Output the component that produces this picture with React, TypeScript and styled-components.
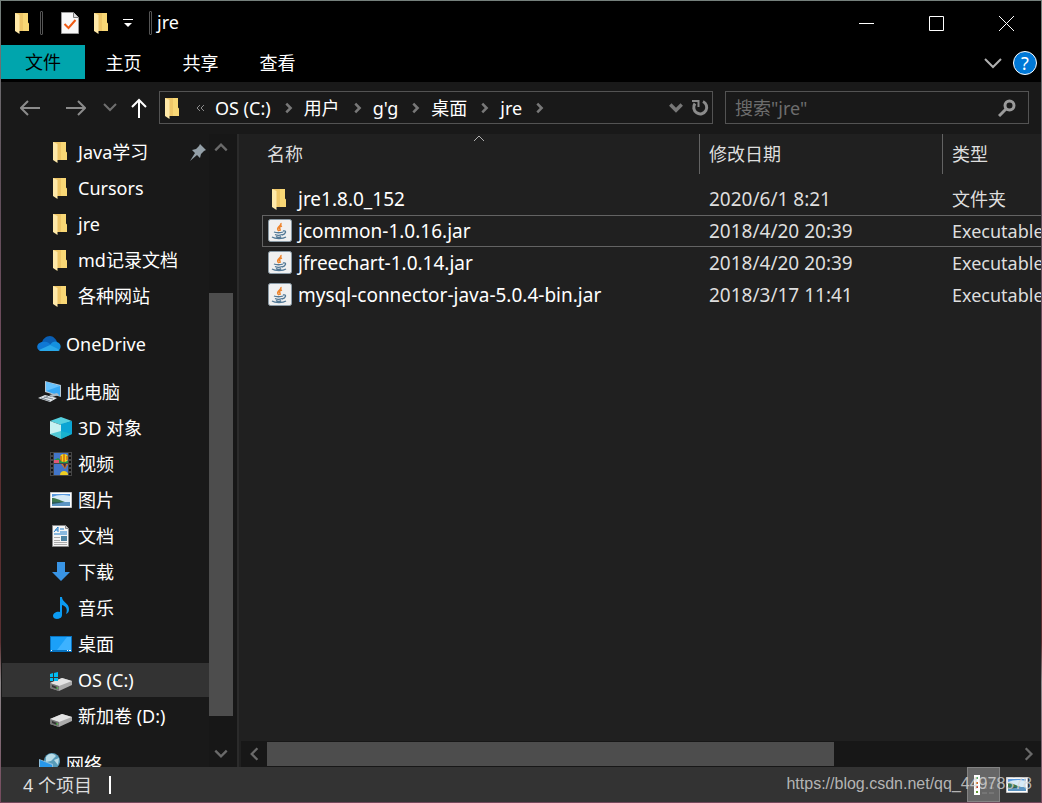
import React from "react";
import styled, { createGlobalStyle, css } from "styled-components";

const Global = createGlobalStyle`
  *, *::before, *::after { box-sizing: border-box; }
  body { margin: 0; background: #000; }
  button, input { font: inherit; color: inherit; }
  svg { flex: none; }
`;

const plainButton = css`
  display: flex;
  align-items: center;
  justify-content: center;
  padding: 0;
  border: 0;
  background: transparent;
`;

const Frame = styled.div`
  height: 100vh;
  display: flex;
  padding: 1px;
  overflow: hidden;
  background: linear-gradient(#75807c, #61515c 22%, #74495c 50%, #5b2f31 60%, #5b2f31 80%, #8a8587 85%, #74485c);
  font-family: "Noto Sans", "Noto Sans CJK SC", sans-serif;
  font-size: 18px;
  line-height: 24px;
  color: #fff;
`;

const Window = styled.div`
  flex: 1;
  min-width: 0;
  display: flex;
  flex-direction: column;
  background: #191919;
`;

const TitleBar = styled.header`
  height: 44px;
  flex: none;
  display: flex;
  align-items: center;
  background: #000;
`;

const QuickAccess = styled.div`
  display: flex;
  align-items: center;
  padding-left: 10px;
`;

const QuickButton = styled.button<{ $w?: number }>`
  ${plainButton}
  flex: none;
  width: ${(p) => p.$w ?? 32}px;
  height: 32px;
`;

const Divider = styled.span`
  width: 3px;
  height: 24px;
  margin: 0 5px;
  border: 1px solid #555;
  border-radius: 1px;
`;

const Title = styled.h1`
  flex: 1;
  margin: 0;
  padding-bottom: 2px;
  font-size: 18px;
  font-weight: 400;
`;

const CaptionButton = styled.button`
  ${plainButton}
  width: 70px;
  height: 44px;
`;

const Ribbon = styled.nav`
  height: 37px;
  flex: none;
  display: flex;
  align-items: flex-start;
  background: #000;
`;

const Tab = styled.button<{ $file?: boolean }>`
  ${plainButton}
  width: ${(p) => (p.$file ? 84 : 77)}px;
  height: 36px;
  ${(p) => p.$file && css`
    height: 34px;
    background: #00a5ad;
    color: #000;
  `}
`;

const RibbonEnd = styled.div`
  margin-left: auto;
  height: 36px;
  display: flex;
  align-items: center;
  gap: 10px;
  padding-right: 4px;
`;

const HelpButton = styled.button`
  ${plainButton}
  width: 24px;
  height: 24px;
  border: 1px solid #fff;
  border-radius: 50%;
  background: #0078d7;
`;

const AddressRow = styled.div`
  height: 52px;
  flex: none;
  display: grid;
  grid-template-columns: 146px minmax(0, 554fr) 12px minmax(0, 304fr);
  align-items: center;
  padding: 0 12px 1px;
`;

const NavButtons = styled.div`
  display: flex;
  align-items: center;
`;

const NavButton = styled.button<{ $w: number; $last?: boolean }>`
  ${plainButton}
  width: ${(p) => p.$w}px;
  height: 33px;
  ${(p) => p.$last && css`margin-left: auto;`}
`;

const Field = styled.div`
  height: 33px;
  display: flex;
  align-items: center;
  border: 1px solid #535353;
`;

const AddressField = styled(Field)`
  grid-column: 2;
  padding-left: 1px;
`;

const SearchField = styled(Field)`
  grid-column: 4;
  padding: 0 12px 0 9px;
`;

const SearchInput = styled.input`
  flex: 1;
  min-width: 0;
  height: 30px;
  padding: 0;
  border: 0;
  outline: 0;
  background: transparent;
  &::placeholder { color: #6d6d6d; opacity: 1; }
`;

const Crumbs = styled.ol`
  flex: 1;
  min-width: 0;
  display: flex;
  align-items: center;
  margin: 0;
  padding: 0;
  list-style: none;
`;

const Crumb = styled.li`
  display: flex;
  align-items: center;
  white-space: nowrap;
  svg { margin: 0 10px 0 11px; }
`;

const CrumbLink = styled.a`
  color: #fff;
  text-decoration: none;
`;

const Body = styled.div`
  flex: 1;
  min-height: 0;
  display: flex;
`;

const Sidebar = styled.aside`
  width: 238px;
  flex: none;
  display: flex;
  overflow: hidden;
  background: #191919;
`;

const Tree = styled.ul`
  flex: 1;
  margin: 0;
  padding: 0 0 0 1px;
  list-style: none;
`;

const TreeItem = styled.li<{ $gap?: boolean }>`
  height: 36px;
  padding: 1px 0;
  ${(p) => p.$gap && css`margin-top: 12px;`}
`;

const TreeLink = styled.a<{ $root?: boolean; $selected?: boolean }>`
  height: 34px;
  display: flex;
  align-items: center;
  gap: 5px;
  padding-left: ${(p) => (p.$root ? 35 : 47)}px;
  padding-right: 2px;
  background: ${(p) => (p.$selected ? "#333" : "transparent")};
  color: #fff;
  text-decoration: none;
  white-space: nowrap;
`;

const TreeLabel = styled.span`
  flex: 1;
`;

const VScroll = styled.div`
  width: 30px;
  flex: none;
  display: flex;
  flex-direction: column;
  align-items: center;
  padding: 0 4px 0 0;
  border-right: 2px solid #2b2b2b;
  background: #171717;
`;

const HScroll = styled.div`
  height: 26px;
  flex: none;
  display: flex;
  align-items: center;
  margin: 0 0 0 2px;
  background: #171717;
`;

const ScrollButton = styled.button`
  ${plainButton}
  width: 26px;
  height: 26px;
  flex: none;
`;

const Track = styled.div<{ $vertical?: boolean }>`
  flex: 1;
  display: flex;
  flex-direction: ${(p) => (p.$vertical ? "column" : "row")};
`;

const Space = styled.div<{ $grow: number }>`
  flex: ${(p) => p.$grow} 0 0;
`;

const Thumb = styled.div<{ $grow: number }>`
  flex: ${(p) => p.$grow} 0 0;
  min-width: 24px;
  min-height: 24px;
  background: #4d4d4d;
`;

const Content = styled.main`
  flex: 1;
  min-width: 0;
  display: flex;
  flex-direction: column;
  background: #202020;
`;

const TableArea = styled.div`
  flex: 1;
  min-height: 0;
  overflow: hidden;
  padding-left: 23px;
`;

const FileTable = styled.table`
  width: 1000px;
  table-layout: fixed;
  border-collapse: separate;
  border-spacing: 0;
  tbody::before { content: ""; display: block; height: 9px; }
`;

const Heading = styled.th<{ $w?: number }>`
  position: relative;
  width: ${(p) => (p.$w ? `${p.$w}px` : "auto")};
  height: 40px;
  padding: 0 0 0 9px;
  border-left: 1px solid #636363;
  color: #dedede;
  font-weight: 400;
  text-align: left;
  &:first-child { padding-left: 5px; border-left: 0; }
`;

const SortMark = styled.span`
  position: absolute;
  top: 1px;
  left: 0;
  right: 4px;
  display: flex;
  justify-content: center;
`;

const Cell = styled.td`
  height: 32px;
  padding: 0 0 0 10px;
  border: 0 solid transparent;
  border-width: 1px 0;
  color: #dedede;
  white-space: nowrap;
`;

const NameCell = styled(Cell)`
  padding-left: 5px;
  border-left-width: 1px;
  color: #fff;
  font-size: 19px;
`;

const DateCell = styled(Cell)`
  font-size: 19px;
`;

const Row = styled.tr<{ $focused?: boolean }>`
  ${(p) => p.$focused && css`
    ${Cell} { border-color: #636363; }
  `}
`;

const FileName = styled.span`
  display: flex;
  align-items: center;
  gap: 6px;
`;

const StatusBar = styled.footer`
  height: 35px;
  flex: none;
  display: flex;
  align-items: center;
  position: relative;
  padding: 0 8px 0 22px;
  background: #333;
  color: #dedede;
`;

const StatusMark = styled.span`
  width: 2px;
  height: 18px;
  margin-left: 17px;
  background: #fff;
`;

const ViewButtons = styled.div`
  margin-left: auto;
  display: flex;
`;

const ViewButton = styled.button<{ $active?: boolean }>`
  ${plainButton}
  width: 33px;
  height: 35px;
  ${(p) => p.$active && css`
    border: 1px solid #838383;
    background: #666;
  `}
`;

const Watermark = styled.span`
  position: absolute;
  right: 9px;
  top: 6px;
  font-family: "Liberation Sans", sans-serif;
  font-size: 16px;
  line-height: 22px;
  color: rgba(215, 215, 215, 0.8);
`;

const FolderIcon = () => (
  <svg width="24" height="24" viewBox="0 0 24 24" aria-hidden="true">
    <path d="M4 2h13v9.500l1 1V20H8z" fill="#f8d775" />
    <path d="M8 4v16h4V2H4z" fill="#efc768" />
    <path d="M4 2l4.500 2v19L4 20z" fill="#ffe9a8" />
  </svg>
);

const CheckDocIcon = () => (
  <svg width="18" height="22" viewBox="0 0 18 22" aria-hidden="true">
    <path d="M.5 .5h12l5 5v16H.5z" fill="#f8f8f8" stroke="#9a9a9a" />
    <path d="M12.500 .5v5h5" fill="#ddd" stroke="#7a7a7a" />
    <path d="M3.500 12l4 4 7-8" fill="none" stroke="#ef5a13" strokeWidth="2" />
  </svg>
);

type ChevronProps = { dir: "up" | "down" | "left" | "right"; size?: number; w?: number; color?: string };
const Chevron = ({ dir, size = 14, w = 2, color = "#787878" }: ChevronProps) => {
  const d = { up: "M2 10l5-5 5 5", down: "M2 4l5 5 5-5", left: "M10 2L5 7l5 5", right: "M5 2l5 5-5 5" }[dir];
  return (
    <svg width={size} height={size} viewBox="0 0 14 14" aria-hidden="true">
      <path d={d} fill="none" stroke={color} strokeWidth={w} />
    </svg>
  );
};

const OneDriveIcon = () => (
  <svg width="24" height="24" viewBox="0 0 24 24" aria-hidden="true">
    <path d="M5 10c1-3 4-6 8-6 3 0 6 3 7 6l-6 5z" fill="#0a5fb4" />
    <path d="M5 19c-7 0-6-9 1-9 4-1 6 1 8 3l3 2-6 4z" fill="#0f78d4" />
    <path d="M13 13c2-4 6-4 7-3 5 1 5 9-1 9h-6z" fill="#1490df" />
    <path d="M2 18l11-5 10 5c-1 1-2 1-4 1H5c-1 0-2 0-3-1z" fill="#28a8ea" />
  </svg>
);

const ComputerIcon = () => (
  <svg width="24" height="24" viewBox="0 0 24 24" aria-hidden="true">
    <path d="M8 1l16 4v12L8 12z" fill="#b7c9d6" />
    <path d="M9 2l14 4v10L9 11z" fill="#36a8f6" />
    <path d="M9 2l14 4-14 5z" fill="#67c3ff" />
    <path d="M12 15l8-2 2 2-7 2z" fill="#aebbc5" />
    <path d="M1 18l7-3 12 3-7 4z" fill="#e0e5e9" />
    <path d="M4 18l9 3M7 17l9 2M5 19l6-3" stroke="#7f8b94" />
  </svg>
);

const CubeIcon = () => (
  <svg width="24" height="24" viewBox="0 0 24 24" aria-hidden="true">
    <path d="M12 1l11 4-11 4L1 5z" fill="#56d0df" />
    <path d="M1 5l11 4v14L1 18z" fill="#c8f1f2" />
    <path d="M12 8l11-3v13l-11 5z" fill="#0aa5d4" />
    <path d="M1 18l11-3 11 3-11 5z" fill="#20b8ca" opacity=".7" />
  </svg>
);

const VideoIcon = () => (
  <svg width="24" height="24" viewBox="0 0 24 24" aria-hidden="true">
    <path d="M1 0h22v24H1z" fill="#454545" />
    <path d="M5 1h14v10H5zM5 12h14v11H5z" fill="#4275c8" />
    <path d="M5 8l4-2 3 2 7 1v2H5z" fill="#269448" />
    <circle cx="15" cy="6" r="4" fill="#f4d319" />
    <path d="M15 2v8M12 4v5M18 4v4" stroke="#b83b17" />
    <path d="M5 8h5v3H5z" fill="#e05878" />
    <path d="M12 12h7l-3 5z" fill="#d97520" />
    <path d="M14 12h3l-1 4z" fill="#37294c" />
    <path d="M11 23c0-5 7-5 8-1v1z" fill="#efce22" />
    <path d="M3 1v22M21 1v22" stroke="#111" strokeWidth="2" strokeDasharray="2 2" />
  </svg>
);

const PictureIcon = () => (
  <svg width="24" height="24" viewBox="0 0 24 24" aria-hidden="true">
    <path d="M1.500 4.500h21v15h-21z" fill="#fff" stroke="#c4c4c4" />
    <path d="M3 6h18v12H3z" fill="#5b9be0" />
    <path d="M3 9c5-2 10-3 18-1v6H3z" fill="#d6eaf7" />
    <path d="M3 10c4 0 7 2 13 4H3z" fill="#3d7850" />
    <path d="M3 14h18v4H3z" fill="#5b94c2" />
    <path d="M3 14h12l-5 1-7 1z" fill="#2d5c58" />
  </svg>
);

const DocumentIcon = () => (
  <svg width="24" height="24" viewBox="0 0 24 24" aria-hidden="true">
    <path d="M3.500 1.500h13l3 3v18h-16z" fill="#f5f5f5" stroke="#888" />
    <path d="M16.500 1.500v3h3" fill="#ccc" stroke="#888" />
    <path d="M5 8l4-5v5M6 6h3M11 5h4M11 8h7M5 10h13" stroke="#1f7cc8" fill="none" />
    <path d="M5 13.500h6M5 16.500h6M5 18.500h13M5 20.500h13" stroke="#aaa" />
    <path d="M12 12h6v5h-6z" fill="#4d83a2" />
  </svg>
);

const DownloadIcon = () => (
  <svg width="24" height="24" viewBox="0 0 24 24" aria-hidden="true">
    <path d="M8 2h8v10h5l-9 9-9-9h5z" fill="#3994e4" />
  </svg>
);

const MusicIcon = () => (
  <svg width="24" height="24" viewBox="0 0 24 24" aria-hidden="true">
    <path d="M11 1h2c0 5 7 6 7 12 0 3-1 4-3 5 2-5 0-8-4-9v10c0 5-9 5-9 1 0-3 4-5 7-4z" fill="#0b9bf2" />
  </svg>
);

const DesktopIcon = () => (
  <svg width="24" height="24" viewBox="0 0 24 24" aria-hidden="true">
    <path d="M1 4h22v16H1z" fill="#0873c0" />
    <path d="M2 5h20v13H2z" fill="#1ba0f8" />
    <path d="M18 5h4v13H8z" fill="#3db2ff" />
    <path d="M2 18.500h1M18 18.500h1M20 18.500h2" stroke="#fff" />
  </svg>
);

const DriveIcon = ({ system = false }: { system?: boolean }) => (
  <svg width="24" height="24" viewBox="0 0 24 24" aria-hidden="true">
    <path d="M1 15l12-5 10 3v4l-13 6-9-3z" fill="#aaa" />
    <path d="M1 15l12-5 10 3-13 5z" fill="#e3e3e3" />
    <path d="M1 15l9 3v5l-9-3z" fill="#777" />
    <path d="M3 17l5 2v2l-5-2z" fill="#333" />
    <path d="M7 20h2" stroke="#47c93f" />
    {system && (
      <path d="M1 6l3-1v4H1zM5 5l4-1v5H5zM1 10h3v3H1zM5 10h4v3H5z" fill="#00bcf2" />
    )}
  </svg>
);

const NetworkIcon = () => (
  <svg width="24" height="24" viewBox="0 0 24 24" aria-hidden="true">
    <circle cx="15" cy="9" r="8" fill="#579bb9" />
    <path d="M9 5c3-4 7-4 10-1l-5 5-5 1zM17 8l5-2-1 7z" fill="#b9dce7" />
    <path d="M2 7l14 5v11L2 19z" fill="#8fbedb" />
    <path d="M3 8l12 5v9L3 18z" fill="#2898ea" />
  </svg>
);

const JarIcon = () => (
  <svg width="24" height="24" viewBox="0 0 24 24" aria-hidden="true">
    <rect x=".5" y=".5" width="23" height="22" rx="2" fill="#f0f0f0" stroke="#8b9ba6" />
    <path d="M13 4c1 3-5 4-3 7l1 1M14 7c-3 1-3 2-2 3v2" fill="none" stroke="#ee842c" strokeWidth="1.500" />
    <path d="M6 13c2 1 7 1 9 0M15 12c4-1 3 3-1 4M7 15.500c2 1 5 1 7 0M8 17.500c2 1 4 1 5 0M4 18c3 2 11 2 14 0" fill="none" stroke="#527895" strokeWidth="1.300" />
  </svg>
);

const PinIcon = () => (
  <svg width="18" height="18" viewBox="0 0 18 18" aria-hidden="true">
    <path d="M11 1l6 6-2 1-3 3-1 4-3-3-7 6 5-8-3-3 4-1 3-3z" fill="#94a0a8" />
  </svg>
);

const tree = [
  { label: "Java学习", icon: <FolderIcon />, pinned: true },
  { label: "Cursors", icon: <FolderIcon /> },
  { label: "jre", icon: <FolderIcon /> },
  { label: "md记录文档", icon: <FolderIcon /> },
  { label: "各种网站", icon: <FolderIcon /> },
  { label: "OneDrive", icon: <OneDriveIcon />, root: true },
  { label: "此电脑", icon: <ComputerIcon />, root: true },
  { label: "3D 对象", icon: <CubeIcon /> },
  { label: "视频", icon: <VideoIcon /> },
  { label: "图片", icon: <PictureIcon /> },
  { label: "文档", icon: <DocumentIcon /> },
  { label: "下载", icon: <DownloadIcon /> },
  { label: "音乐", icon: <MusicIcon /> },
  { label: "桌面", icon: <DesktopIcon /> },
  { label: "OS (C:)", icon: <DriveIcon system />, selected: true },
  { label: "新加卷 (D:)", icon: <DriveIcon /> },
  { label: "网络", icon: <NetworkIcon />, root: true },
];

const files = [
  { name: "jre1.8.0_152", date: "2020/6/1 8:21", type: "文件夹", folder: true },
  { name: "jcommon-1.0.16.jar", date: "2018/4/20 20:39", type: "Executable Jar File", focused: true },
  { name: "jfreechart-1.0.14.jar", date: "2018/4/20 20:39", type: "Executable Jar File" },
  { name: "mysql-connector-java-5.0.4-bin.jar", date: "2018/3/17 11:41", type: "Executable Jar File" },
];

const crumbs = ["OS (C:)", "用户", "g'g", "桌面", "jre"];

export default function App() {
  return (
    <Frame>
      <Global />
      <Window>
        <TitleBar>
          <QuickAccess>
            <FolderIcon />
            <Divider />
            <QuickButton $w={44} aria-label="属性"><CheckDocIcon /></QuickButton>
            <QuickButton $w={20} aria-label="新建文件夹"><FolderIcon /></QuickButton>
            <QuickButton $w={32} aria-label="自定义快速访问工具栏">
              <svg width="10" height="10" viewBox="0 0 10 10" aria-hidden="true">
                <path d="M0 1h10v1H0zM1 5h8L5 9z" fill="#fff" />
              </svg>
            </QuickButton>
            <Divider />
          </QuickAccess>
          <Title>jre</Title>
          <CaptionButton aria-label="最小化">
            <svg width="15" height="15" viewBox="0 0 15 15"><path d="M0 7h15v1H0z" fill="#fff" /></svg>
          </CaptionButton>
          <CaptionButton aria-label="最大化">
            <svg width="15" height="15" viewBox="0 0 15 15"><path d="M.5 .5h14v14H.5z" fill="none" stroke="#fff" /></svg>
          </CaptionButton>
          <CaptionButton aria-label="关闭">
            <svg width="15" height="15" viewBox="0 0 15 15"><path d="M0 0l15 15M15 0L0 15" stroke="#fff" /></svg>
          </CaptionButton>
        </TitleBar>

        <Ribbon>
          <Tab $file>文件</Tab>
          <Tab>主页</Tab>
          <Tab>共享</Tab>
          <Tab>查看</Tab>
          <RibbonEnd>
            <QuickButton $w={20} aria-label="展开功能区">
              <svg width="18" height="11" viewBox="0 0 18 11" aria-hidden="true">
                <path d="M1 1l8 8 8-8" fill="none" stroke="#b0b0b0" strokeWidth="2" />
              </svg>
            </QuickButton>
            <HelpButton aria-label="帮助">?</HelpButton>
          </RibbonEnd>
        </Ribbon>

        <AddressRow>
          <NavButtons>
            <NavButton $w={34} aria-label="后退">
              <svg width="20" height="16" viewBox="0 0 20 16"><path d="M20 8H1M8 1L1 8l7 7" fill="none" stroke="#8b8b8b" strokeWidth="2" /></svg>
            </NavButton>
            <NavButton $w={58} aria-label="前进">
              <svg width="20" height="16" viewBox="0 0 20 16"><path d="M0 8h18M12 1l7 7-7 7" fill="none" stroke="#8b8b8b" strokeWidth="2" /></svg>
            </NavButton>
            <NavButton $w={10} aria-label="最近浏览的位置">
              <svg width="14" height="9" viewBox="0 0 14 9"><path d="M1 1l6 6 6-6" fill="none" stroke="#6f6f6f" strokeWidth="2" /></svg>
            </NavButton>
            <NavButton $w={40} $last aria-label="上移">
              <svg width="16" height="20" viewBox="0 0 16 20"><path d="M8 20V2M1 9l7-7 7 7" fill="none" stroke="#fff" strokeWidth="2" /></svg>
            </NavButton>
          </NavButtons>
          <AddressField>
            <FolderIcon />
            <QuickButton $w={30} aria-label="更多位置">
              <svg width="9" height="8" viewBox="0 0 9 8"><path d="M4 1L1 4l3 3M8 1L5 4l3 3" fill="none" stroke="#8b8b8b" /></svg>
            </QuickButton>
            <Crumbs>
              {crumbs.map((c) => (
                <Crumb key={c}>
                  <CrumbLink href="#">{c}</CrumbLink>
                  <Chevron dir="right" size={12} w={3} />
                </Crumb>
              ))}
            </Crumbs>
            <QuickButton $w={24} aria-label="以前的位置"><Chevron dir="down" size={16} w={3} /></QuickButton>
            <QuickButton $w={24} aria-label="刷新">
              <svg width="18" height="18" viewBox="0 0 18 18">
                <path d="M12 2.500a6.500 6.500 0 1 1-8 2" fill="none" stroke="#8b8b8b" strokeWidth="3" />
                <path d="M1 2h6.500v6" fill="none" stroke="#8b8b8b" strokeWidth="2" />
              </svg>
            </QuickButton>
          </AddressField>
          <SearchField>
            <SearchInput aria-label="搜索" placeholder={'搜索"jre"'} />
            <svg width="18" height="18" viewBox="0 0 18 18" aria-hidden="true">
              <circle cx="11.500" cy="6.500" r="4.500" fill="none" stroke="#9a9a9a" strokeWidth="3" />
              <path d="M8 10l-7 7" stroke="#9a9a9a" strokeWidth="3" />
            </svg>
          </SearchField>
        </AddressRow>

        <Body>
          <Sidebar>
            <Tree>
              {tree.map((t) => (
                <TreeItem key={t.label} $gap={t.root}>
                  <TreeLink href="#" $root={t.root} $selected={t.selected}>
                    {t.icon}
                    <TreeLabel>{t.label}</TreeLabel>
                    {t.pinned && <PinIcon />}
                  </TreeLink>
                </TreeItem>
              ))}
            </Tree>
            <VScroll>
              <ScrollButton aria-label="向上滚动"><Chevron dir="up" size={16} color="#6a6a6a" /></ScrollButton>
              <Track $vertical>
                <Space $grow={133} />
                <Thumb $grow={423} style={{ width: 24 }} />
                <Space $grow={25} />
              </Track>
              <ScrollButton aria-label="向下滚动"><Chevron dir="down" size={16} color="#6a6a6a" /></ScrollButton>
            </VScroll>
          </Sidebar>

          <Content>
            <TableArea>
              <FileTable>
                <thead>
                  <tr>
                    <Heading $w={437}>
                      名称
                      <SortMark>
                        <svg width="12" height="7" viewBox="0 0 12 7" aria-hidden="true">
                          <path d="M1 6l5-5 5 5" fill="none" stroke="#b0b0b0" />
                        </svg>
                      </SortMark>
                    </Heading>
                    <Heading $w={243}>修改日期</Heading>
                    <Heading>类型</Heading>
                  </tr>
                </thead>
                <tbody>
                  {files.map((f) => (
                    <Row key={f.name} $focused={f.focused}>
                      <NameCell>
                        <FileName>
                          {f.folder ? <FolderIcon /> : <JarIcon />}
                          {f.name}
                        </FileName>
                      </NameCell>
                      <DateCell>{f.date}</DateCell>
                      <Cell>{f.type}</Cell>
                    </Row>
                  ))}
                </tbody>
              </FileTable>
            </TableArea>
            <HScroll>
              <ScrollButton aria-label="向左滚动"><Chevron dir="left" size={16} color="#6a6a6a" /></ScrollButton>
              <Track>
                <Thumb $grow={567} style={{ height: 24 }} />
                <Space $grow={181} />
              </Track>
              <ScrollButton aria-label="向右滚动"><Chevron dir="right" size={16} color="#6a6a6a" /></ScrollButton>
            </HScroll>
          </Content>
        </Body>

        <StatusBar>
          <span>4 个项目</span>
          <StatusMark />
          <ViewButtons>
            <ViewButton $active aria-label="详细信息">
              <svg width="24" height="24" viewBox="0 0 24 24">
                <path d="M2 2h6v20H2z" fill="#fff" />
                <path d="M4 4h2v2H4z" fill="#4a7" /><path d="M4 9h2v2H4z" fill="#c63" />
                <path d="M4 13h2v2H4z" fill="#b33" /><path d="M4 18h2v2H4z" fill="#693" />
                <path d="M10 5h12M10 10h12M10 15h12M10 20h12" stroke="#858585" strokeDasharray="5 2" />
              </svg>
            </ViewButton>
            <ViewButton aria-label="大图标"><PictureIcon /></ViewButton>
          </ViewButtons>
          <Watermark>https://blog.csdn.net/qq_44978578</Watermark>
        </StatusBar>
      </Window>
    </Frame>
  );
}
